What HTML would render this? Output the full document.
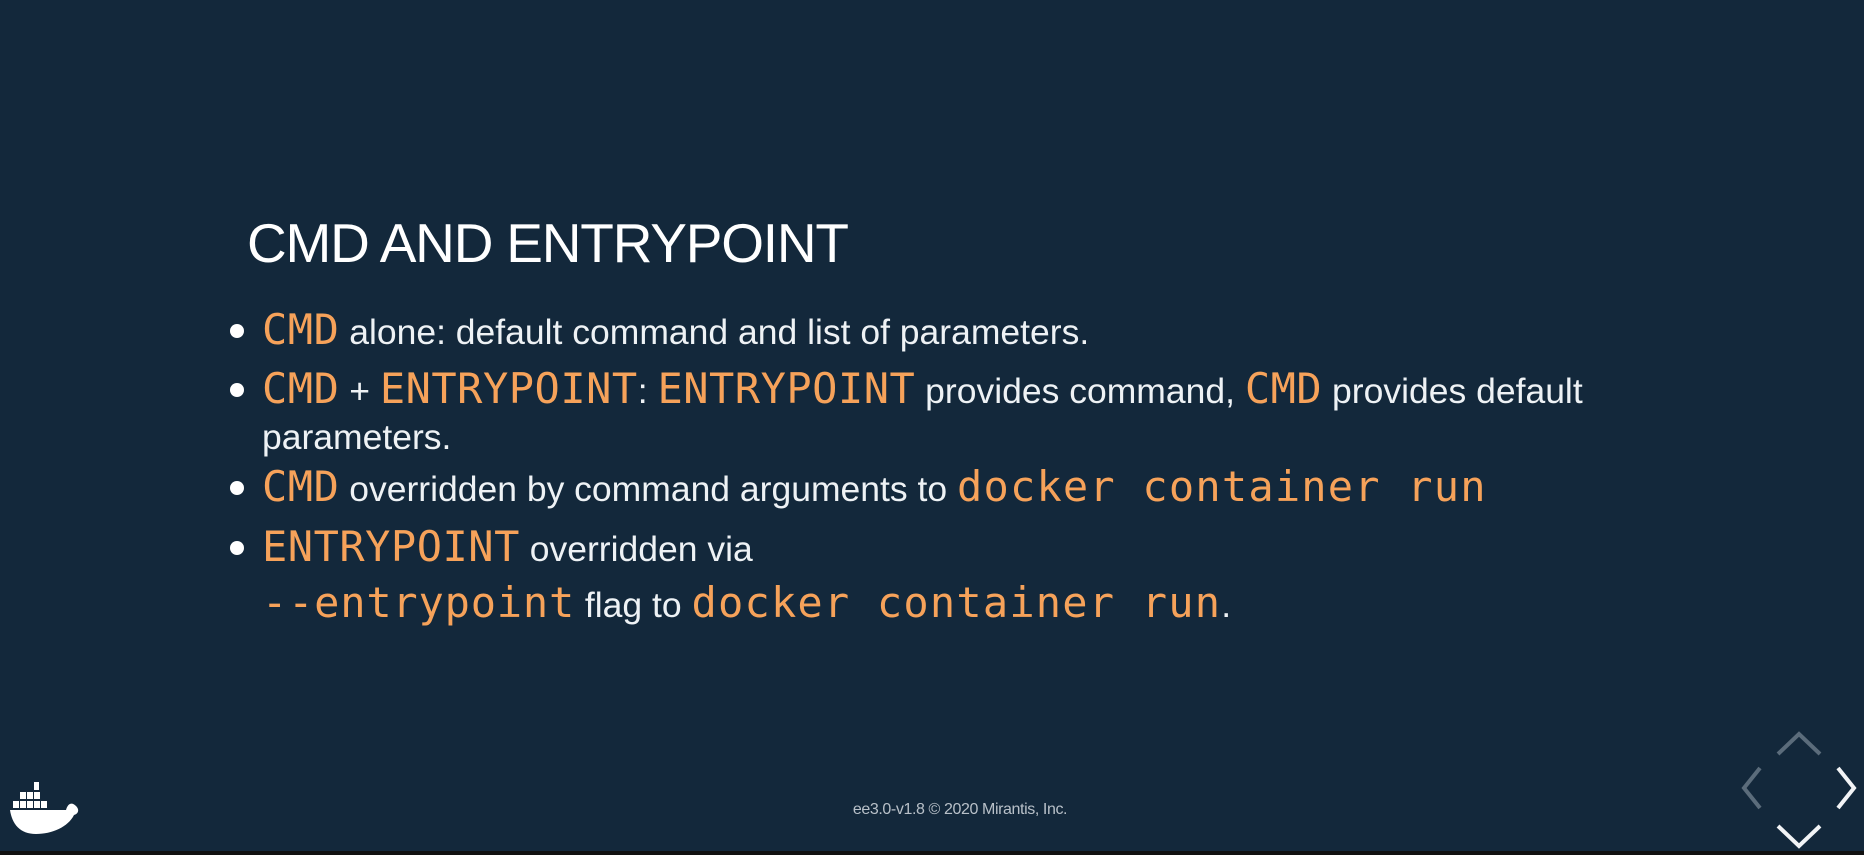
<!DOCTYPE html>
<html><head><meta charset="utf-8"><style>
html,body{margin:0;padding:0}
body{width:1864px;height:855px;background:#13283b;position:relative;overflow:hidden;font-family:"Liberation Sans",sans-serif;color:#eef2f5}
.title{position:absolute;left:247px;top:216px;font-size:55px;font-weight:normal;letter-spacing:-1.2px;color:#fff;white-space:nowrap;line-height:1}
.line{position:absolute;left:262px;white-space:nowrap;font-size:35.5px;letter-spacing:0px;line-height:1}
.m{font-family:"DejaVu Sans Mono","Liberation Mono",monospace;color:#f6a25a;font-size:42px;letter-spacing:0.5px}
.dot{position:absolute;left:230px;width:14px;height:14px;border-radius:50%;background:#fff}
.footer{position:absolute;left:28px;width:1864px;text-align:center;top:801px;font-size:16px;color:#b8c0c8;letter-spacing:-0.4px}
.bar{position:absolute;left:0;bottom:0;width:1864px;height:4px;background:#111}
</style></head><body>
<div class="title">CMD AND ENTRYPOINT</div>

<div class="dot" style="top:324px"></div>
<div class="line" style="top:309px"><span class="m">CMD</span> alone: default command and list of parameters.</div>

<div class="dot" style="top:383px"></div>
<div class="line" style="top:368px"><span class="m">CMD</span> + <span class="m">ENTRYPOINT</span>: <span class="m">ENTRYPOINT</span> provides command, <span class="m">CMD</span> provides default</div>
<div class="line" style="top:420px">parameters.</div>

<div class="dot" style="top:481px"></div>
<div class="line" style="top:466px"><span class="m">CMD</span> overridden by command arguments to <span class="m" style="font-size:42px;letter-spacing:1.2px">docker container run</span></div>

<div class="dot" style="top:541px"></div>
<div class="line" style="top:526px"><span class="m">ENTRYPOINT</span> overridden via</div>
<div class="line" style="top:582px"><span class="m" style="letter-spacing:0.8px">--entrypoint</span> flag to <span class="m" style="font-size:42px;letter-spacing:1.2px">docker container run</span>.</div>

<div class="footer">ee3.0-v1.8 © 2020 Mirantis, Inc.</div>

<svg style="position:absolute;left:8px;top:780px" width="76" height="56" viewBox="0 0 76 56">
<g fill="#fff">
<rect x="26" y="2" width="5" height="8"/>
<rect x="12" y="12" width="6" height="7"/><rect x="19" y="12" width="6" height="7"/><rect x="26" y="12" width="6" height="7"/>
<rect x="5" y="21" width="6" height="7"/><rect x="12" y="21" width="6" height="7"/><rect x="19" y="21" width="6" height="7"/><rect x="26" y="21" width="6" height="7"/><rect x="33" y="21" width="6" height="7"/>
<path d="M2 30 H58 C60 23 64 22 68 26 C72 30 70 34 66 35 C60 47 44 54 28 54 C12 54 4 44 2 30 Z"/>
</g></svg>

<svg style="position:absolute;left:1730px;top:720px" width="134" height="135" viewBox="0 0 134 135">
<g fill="none" stroke-width="4">
<path d="M48 34 L69 14 L90 34" stroke="#5b6c7b"/>
<path d="M30 48 L14 68 L30 88" stroke="#5b6c7b"/>
<path d="M108 48 L124 68 L108 88" stroke="#f2f4f6"/>
<path d="M48 106 L69 126 L90 106" stroke="#f2f4f6"/>
</g></svg>

<div class="bar"></div>
</body></html>
